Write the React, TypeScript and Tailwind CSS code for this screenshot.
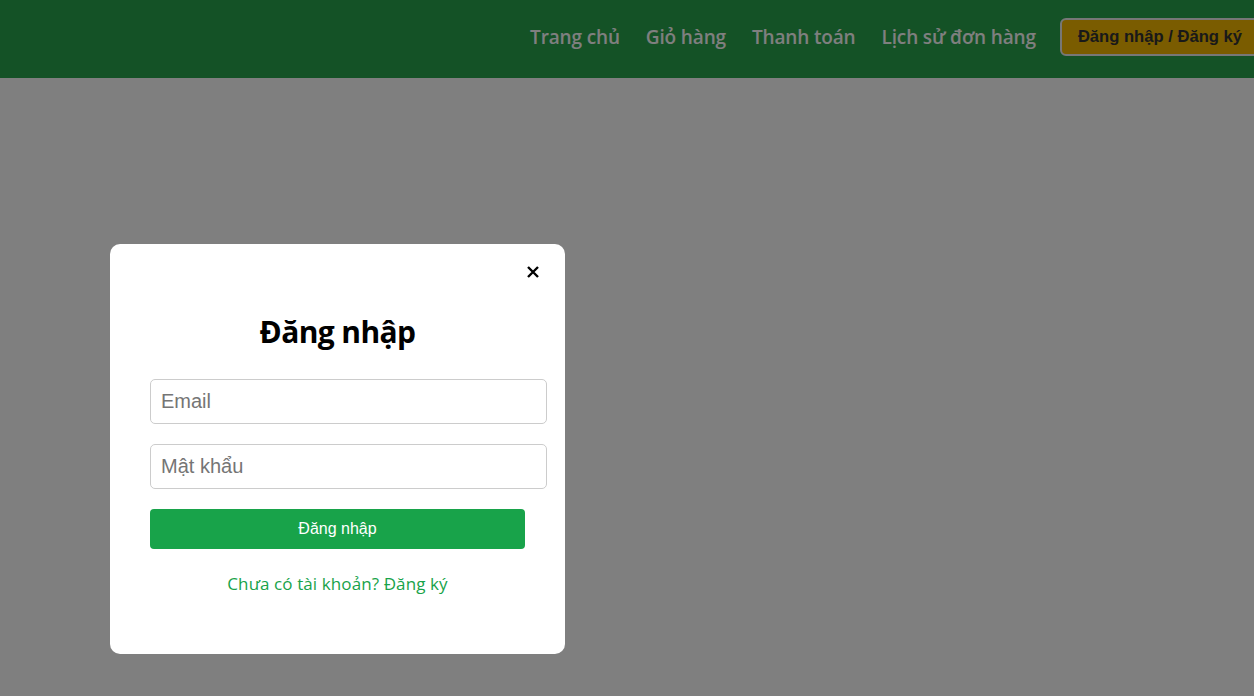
import { useState } from 'react'

const navItems = ['Trang chủ', 'Giỏ hàng', 'Thanh toán', 'Lịch sử đơn hàng']

function Header() {
  return (
    <header className="h-[78px] pb-[4px] bg-[#28a44c] flex items-center justify-end overflow-hidden">
      <nav className="flex items-center gap-[26px] font-['Open_Sans','Noto_Sans',sans-serif] text-[19px] font-semibold tracking-[-0.15px] text-white">
        {navItems.map((item) => (
          <a key={item} href="#" className="leading-none">
            {item}
          </a>
        ))}
      </nav>
      <button className="ml-[24px] -mr-[6px] h-[38px] shrink-0 px-[16px] rounded-[6px] border-2 border-[#eeeeee] bg-[#f4b800] text-[#333333] font-['Liberation_Sans',Arial,sans-serif] text-[16.6px] font-bold">
        Đăng nhập / Đăng ký
      </button>
    </header>
  )
}

function LoginModal({ onClose }: { onClose: () => void }) {
  return (
    <div className="fixed inset-0 bg-black/50">
      <div className="absolute left-[110px] top-[244px] w-[455px] h-[410px] bg-white rounded-[10px] px-[40px] pt-[18px]">
        <div className="flex justify-end -mr-[18px]">
          <button onClick={onClose} className="w-[20px] h-[20px] flex items-center justify-center">
            <svg width="14" height="14" viewBox="0 0 14 14">
              <path d="M2 2 L12 12 M12 2 L2 12" stroke="#000" strokeWidth="2.4" />
            </svg>
          </button>
        </div>
        <h2 className="mt-[30px] text-center font-['Open_Sans','Noto_Sans',sans-serif] text-[30px] font-bold leading-[40px] text-black tracking-[-0.6px]">
          Đăng nhập
        </h2>
        <form className="mt-[27px] flex flex-col" onSubmit={(e) => e.preventDefault()}>
          <input
            type="email"
            placeholder="Email"
            className="w-[397px] h-[45px] px-[10px] border border-[#cccccc] rounded-[5px] font-['Liberation_Sans',Arial,sans-serif] text-[20px] text-black placeholder:text-[#757575] outline-none"
          />
          <input
            type="password"
            placeholder="Mật khẩu"
            className="mt-[20px] w-[397px] h-[45px] px-[10px] border border-[#cccccc] rounded-[5px] font-['Liberation_Sans',Arial,sans-serif] text-[20px] text-black placeholder:text-[#757575] outline-none"
          />
          <button
            type="submit"
            className="mt-[20px] w-[375px] h-[40px] bg-[#18a34a] rounded-[4px] text-white font-['Liberation_Sans',Arial,sans-serif] text-[16px]"
          >
            Đăng nhập
          </button>
        </form>
        <p className="mt-[22px] text-center font-['Open_Sans','Noto_Sans',sans-serif] text-[17px] text-[#18a34a] tracking-[0.1px]">
          Chưa có tài khoản? <a href="#">Đăng ký</a>
        </p>
      </div>
    </div>
  )
}

export default function App() {
  const [open, setOpen] = useState(true)
  return (
    <div className="min-h-[696px] bg-white overflow-x-hidden">
      <Header />
      {open && <LoginModal onClose={() => setOpen(false)} />}
    </div>
  )
}
